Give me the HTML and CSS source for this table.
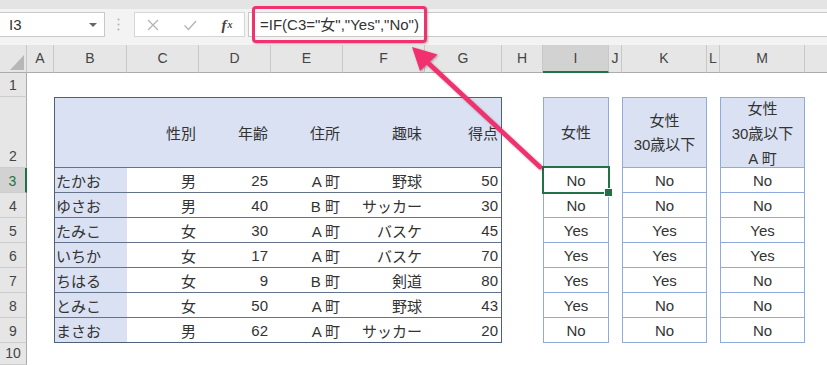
FILE: index.html
```html
<!DOCTYPE html>
<html lang="ja">
<head>
<meta charset="utf-8">
<title>IF</title>
<link rel="stylesheet" href="styles.css">
</head>
<body>
<div class="app">
  <div class="topbar">
    <div class="namebox"><span>I3</span><span class="caret"></span></div>
    <div class="grip">
      <svg width="29" height="25" viewBox="0 0 29 25"><circle cx="13.5" cy="7.5" r="1" fill="#b0b0b0"/><circle cx="13.5" cy="12.5" r="1" fill="#b0b0b0"/><circle cx="13.5" cy="17.5" r="1" fill="#b0b0b0"/></svg>
    </div>
    <div class="fbtns">
      <span class="btn"><svg width="14" height="14" viewBox="0 0 14 14"><path d="M2 2 L12 12 M12 2 L2 12" stroke="#b4b4b4" stroke-width="1.3" fill="none"/></svg></span>
      <span class="btn"><svg width="14" height="14" viewBox="0 0 14 14"><path d="M1.5 7.5 L5.5 11.5 L13 3" stroke="#b4b4b4" stroke-width="1.3" fill="none"/></svg></span>
      <span class="btn fx"><i>f</i><i class="x">x</i></span>
    </div>
    <div class="formula">=IF(C3="女","Yes","No")</div>
  </div>

  <div class="sheet">
    <div class="ch corner"><svg width="26" height="27" viewBox="0 0 26 27"><path d="M24 10 L24 25 L10 25 Z" fill="#b7b7b7"/></svg></div>
    <div class="ch">A</div>
    <div class="ch">B</div>
    <div class="ch">C</div>
    <div class="ch">D</div>
    <div class="ch">E</div>
    <div class="ch">F</div>
    <div class="ch">G</div>
    <div class="ch">H</div>
    <div class="ch sel">I</div>
    <div class="ch">J</div>
    <div class="ch">K</div>
    <div class="ch">L</div>
    <div class="ch">M</div>
    <div class="ch last"></div>

    <div class="rh">1</div>
    <div class="rh">2</div>
    <div class="rh sel">3</div>
    <div class="rh">4</div>
    <div class="rh">5</div>
    <div class="rh">6</div>
    <div class="rh">7</div>
    <div class="rh">8</div>
    <div class="rh">9</div>
    <div class="rh">10</div>

    <div class="tbl">
      <div class="tr head"><div></div><div>性別</div><div>年齢</div><div>住所</div><div>趣味</div><div>得点</div></div>
      <div class="tr"><div class="nm">たかお</div><div>男</div><div>25</div><div>A 町</div><div>野球</div><div>50</div></div>
      <div class="tr"><div class="nm">ゆさお</div><div>男</div><div>40</div><div>B 町</div><div>サッカー</div><div>30</div></div>
      <div class="tr"><div class="nm">たみこ</div><div>女</div><div>30</div><div>A 町</div><div>バスケ</div><div>45</div></div>
      <div class="tr"><div class="nm">いちか</div><div>女</div><div>17</div><div>A 町</div><div>バスケ</div><div>70</div></div>
      <div class="tr"><div class="nm">ちはる</div><div>女</div><div>9</div><div>B 町</div><div>剣道</div><div>80</div></div>
      <div class="tr"><div class="nm">とみこ</div><div>女</div><div>50</div><div>A 町</div><div>野球</div><div>43</div></div>
      <div class="tr"><div class="nm">まさお</div><div>男</div><div>62</div><div>A 町</div><div>サッカー</div><div>20</div></div>
    </div>

    <div class="box col-i">
      <div class="h">女性</div>
      <div class="c sel">No</div>
      <div class="c">No</div>
      <div class="c">Yes</div>
      <div class="c">Yes</div>
      <div class="c">Yes</div>
      <div class="c">Yes</div>
      <div class="c">No</div>
    </div>

    <div class="box col-k">
      <div class="h">女性<br>30歳以下</div>
      <div class="c">No</div>
      <div class="c">No</div>
      <div class="c">Yes</div>
      <div class="c">Yes</div>
      <div class="c">Yes</div>
      <div class="c">No</div>
      <div class="c">No</div>
    </div>

    <div class="box col-m">
      <div class="h">女性<br>30歳以下<br>A 町</div>
      <div class="c">No</div>
      <div class="c">No</div>
      <div class="c">Yes</div>
      <div class="c">Yes</div>
      <div class="c">No</div>
      <div class="c">No</div>
      <div class="c">No</div>
    </div>
  </div>

  <div class="callout"></div>
  <svg class="arrow" width="827" height="365" viewBox="0 0 827 365">
    <line x1="540" y1="167" x2="426" y2="61" stroke="#f3306f" stroke-width="4.5" stroke-linecap="round"/>
    <polygon points="412,47 437.5,54.5 420,71" fill="#f3306f"/>
  </svg>
</div>
</body>
</html>
```

FILE: styles.css
```css
* { box-sizing: border-box; }

body {
  margin: 0;
  background: #fff;
  color: #333;
  font-family: "Liberation Sans", "Noto Sans CJK JP", sans-serif;
}

.app {
  position: relative;
  width: 827px;
  height: 365px;
  overflow: hidden;
}

/* ---------- formula bar ---------- */
.topbar {
  height: 45px;
  display: flex;
  align-items: flex-start;
  padding-top: 12px;
  background: linear-gradient(#e4e4e4 0, #e4e4e4 9px, #f3f3f3 9px);
}

.namebox {
  width: 106px;
  height: 25px;
  margin-left: -1px;
  background: #fff;
  border: 1px solid #c8c8c8;
  display: flex;
  align-items: center;
  justify-content: space-between;
  padding: 0 6px 0 9px;
  font-size: 15px;
  color: #333;
}

.caret {
  width: 0;
  height: 0;
  border-left: 4px solid transparent;
  border-right: 4px solid transparent;
  border-top: 4px solid #666;
  margin-right: 1px;
}

.grip {
  width: 29px;
  height: 25px;
}
.grip svg { display: block; }

.fbtns {
  width: 111px;
  height: 25px;
  background: #fff;
  border: 1px solid #d6d6d6;
  display: flex;
  align-items: center;
  gap: 23px;
  padding-left: 11px;
}

.btn {
  width: 14px;
  height: 14px;
  display: flex;
  align-items: center;
  justify-content: center;
}
.btn svg { display: block; }

.fx {
  font-family: "Liberation Serif", serif;
  font-size: 15px;
  font-weight: bold;
  color: #444;
  white-space: nowrap;
  line-height: 14px;
}
.fx .x {
  font-size: 10px;
  margin-left: 1px;
}

.formula {
  flex: 1;
  height: 25px;
  margin-left: 3px;
  background: #fff;
  border: 1px solid #c8c8c8;
  border-right: none;
  padding-left: 11px;
  font-size: 15px;
  line-height: 23px;
  color: #333;
  white-space: nowrap;
}

/* ---------- sheet grid ---------- */
.sheet {
  display: grid;
  grid-template-columns: 27px 27px 73px 72px 72px 72px 82px 77px 41px 66px 13px 85px 13px 85px 1fr;
  grid-template-rows: 28px 24px 71px repeat(7, 25px) 1fr;
  height: 320px;
}

.ch {
  grid-row: 1;
  background: #e6e6e6;
  border-right: 1px solid #c8c8c8;
  border-bottom: 1px solid #ababab;
  text-align: center;
  font-size: 14px;
  line-height: 27px;
  color: #444;
}
.ch.corner { padding: 0; }
.ch.corner svg { display: block; }
.ch.last { border-right: none; }
.ch.sel {
  background: #d2d2d2;
  border-bottom: 2px solid #217346;
}

.rh {
  grid-column: 1;
  background: #e6e6e6;
  border-right: 1px solid #ababab;
  border-bottom: 1px solid #cdcdcd;
  display: flex;
  align-items: flex-end;
  justify-content: center;
  padding-bottom: 3px;
  font-size: 14px;
  line-height: 16px;
  color: #444;
}
.rh.sel {
  background: #d2d2d2;
  border-right: 2px solid #217346;
  color: #217346;
}

/* ---------- main table ---------- */
.tbl {
  grid-column: 3 / 9;
  grid-row: 3 / 11;
  border: 1px solid #50607a;
  display: flex;
  flex-direction: column;
  font-size: 15px;
  color: #333;
}

.tr {
  display: grid;
  grid-template-columns: 72px 72px 72px 72px 82px 1fr;
  height: 25px;
  flex: none;
  border-top: 1px solid #63738c;
}
.tr.head {
  flex: 1 1 0;
  min-height: 0;
  height: auto;
  border-top: none;
  background: #d9e1f2;
}
.tr > div {
  display: flex;
  align-items: center;
  justify-content: flex-end;
  padding-right: 3px;
  white-space: nowrap;
}
.tr > .nm {
  justify-content: flex-start;
  padding-left: 1px;
  background: #d9e1f2;
}

/* ---------- result columns ---------- */
.box {
  grid-row: 3 / 11;
  border: 1px solid #8faadc;
  display: flex;
  flex-direction: column;
  font-size: 15px;
  color: #333;
}
.col-i { grid-column: 10; }
.col-k { grid-column: 12; }
.col-m { grid-column: 14; }

.box .h {
  flex: 1 1 0;
  min-height: 0;
  background: #d9e1f2;
  display: flex;
  align-items: center;
  justify-content: center;
  text-align: center;
  line-height: 24px;
  white-space: nowrap;
}
.col-m .h { line-height: 25px; padding-top: 1px; }
.box .c {
  flex: none;
  height: 25px;
  border-top: 1px solid #8faadc;
  display: flex;
  align-items: center;
  justify-content: center;
}
.box .c.sel { position: relative; }
.box .c.sel::after {
  content: "";
  position: absolute;
  left: -2px;
  right: -2px;
  top: -2px;
  bottom: -2px;
  border: 2px solid #217346;
}
.box .c.sel::before {
  content: "";
  position: absolute;
  right: -5px;
  bottom: -5px;
  width: 7px;
  height: 7px;
  background: #217346;
  border: 1px solid #fff;
  z-index: 2;
}

/* ---------- annotation overlay ---------- */
.callout {
  position: absolute;
  left: 252px;
  top: 6px;
  width: 175px;
  height: 37px;
  border: 3px solid #f2326e;
  border-radius: 4px;
  box-shadow: 1px 1px 2px rgba(0, 0, 0, 0.25);
}

.arrow {
  position: absolute;
  left: 0;
  top: 0;
  pointer-events: none;
  filter: drop-shadow(1px 1px 1px rgba(0, 0, 0, 0.3));
}
```
